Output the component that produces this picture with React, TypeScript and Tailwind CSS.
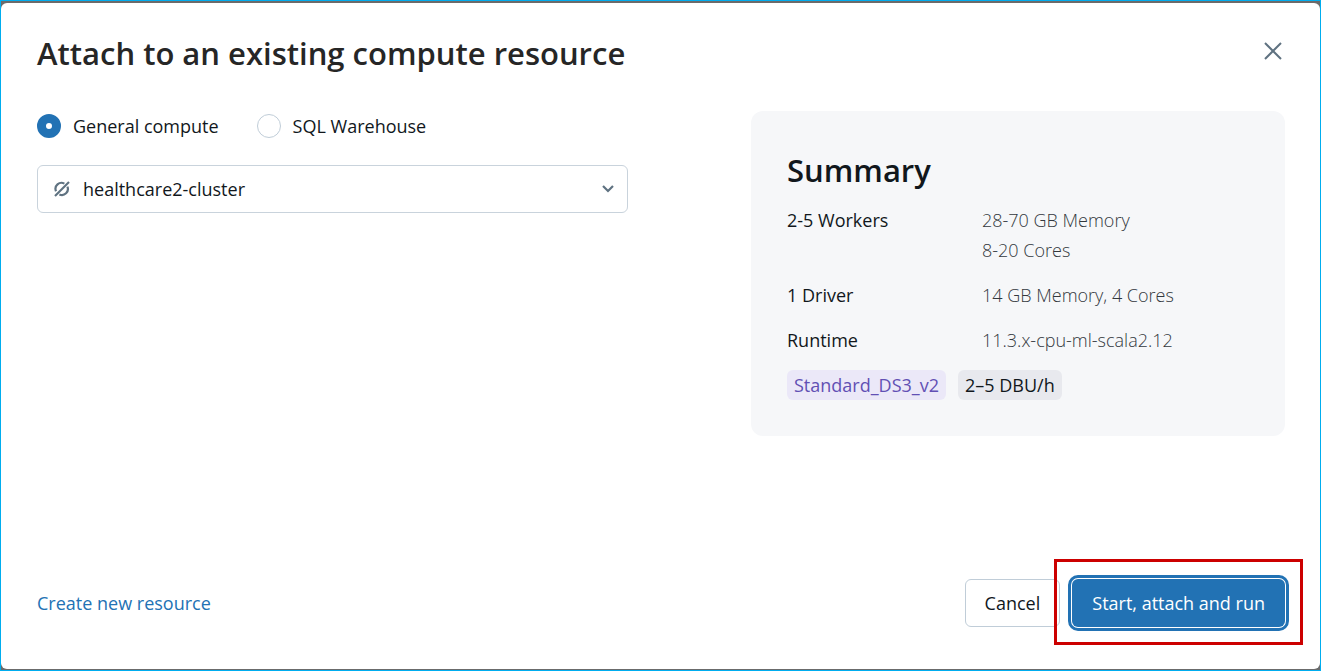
import { useState } from "react";

const computeTypes = ["General compute", "SQL Warehouse"];

const summaryRows = [
  { label: "2-5 Workers", values: ["28-70 GB Memory", "8-20 Cores"] },
  { label: "1 Driver", values: ["14 GB Memory, 4 Cores"] },
  { label: "Runtime", values: ["11.3.x-cpu-ml-scala2.12"] },
];

function StoppedIcon() {
  return (
    <svg width="16" height="16" viewBox="0 0 16 16" fill="none" stroke="#5f7281" strokeWidth="2.2" aria-hidden="true">
      <path d="M2 10.2A6 6 0 0 1 10.4 2.6" />
      <path d="M13.4 5.6A6 6 0 0 1 5.4 13.4" />
      <path d="M1 15 15 1" />
    </svg>
  );
}

function CloseIcon() {
  return (
    <svg width="18" height="18" viewBox="0 0 18 18" fill="none" stroke="#5f7281" strokeWidth="2" aria-hidden="true">
      <path d="M1 1 17 17M17 1 1 17" />
    </svg>
  );
}

function ChevronIcon() {
  return (
    <svg width="12" height="8" viewBox="0 0 12 8" fill="none" stroke="#5f7281" strokeWidth="2.2" aria-hidden="true">
      <path d="M1 1 6 6 11 1" />
    </svg>
  );
}

function Summary() {
  return (
    <section className="rounded-xl bg-[#f6f7f9] p-9">
      <h2 className="mt-[3px] text-[31px] leading-10 font-semibold text-[#11171c]">Summary</h2>
      <dl className="mt-[15px] flex flex-col gap-[15px]">
        {summaryRows.map((row) => (
          <div key={row.label} className="grid grid-cols-[195px_1fr]">
            <dt>{row.label}</dt>
            <dd className="font-light text-[#33383d]">
              {row.values.map((value) => (
                <div key={value}>{value}</div>
              ))}
            </dd>
          </div>
        ))}
      </dl>
      <div className="mt-[15px] flex gap-3">
        <span className="rounded-md bg-[#ebe8f8] px-[7px] text-[#6250b4]">Standard_DS3_v2</span>
        <span className="rounded-md bg-[#e8e9ee] px-[7px]">2–5 DBU/h</span>
      </div>
    </section>
  );
}

export default function App() {
  const [computeType, setComputeType] = useState(computeTypes[0]);

  return (
    <div className="flex min-h-screen flex-col border border-[#00adef] bg-[#6b6b6b] pt-[2px] pb-px font-['Open_Sans',sans-serif] text-[18px] leading-[30px] text-[#11171c]">
      <main role="dialog" aria-labelledby="dialog-title" className="flex grow flex-col rounded-md bg-white pt-6 pr-[35px] pb-[42px] pl-9">
        <header className="flex items-center justify-between">
          <h1 id="dialog-title" className="text-[31px] leading-[52px] font-semibold text-[#262626]">
            Attach to an existing compute resource
          </h1>
          <button type="button" aria-label="Close" className="mb-1 p-[3px]">
            <CloseIcon />
          </button>
        </header>

        <div className="mt-8 grid grid-cols-[591fr_534fr] gap-[123px]">
          <div>
            <div role="radiogroup" aria-label="Compute type" className="flex gap-[38px]">
              {computeTypes.map((type) => (
                <label key={type} className="flex items-center gap-3">
                  <input
                    type="radio"
                    name="compute-type"
                    checked={computeType === type}
                    onChange={() => setComputeType(type)}
                    className="size-6 appearance-none rounded-full border border-[#c0cdd8] bg-white checked:border-[9px] checked:border-[#2272b4]"
                  />
                  {type}
                </label>
              ))}
            </div>
            <div className="relative mt-6">
              <select
                aria-label="Compute resource"
                className="h-12 w-full appearance-none rounded-md border border-[#c9d3dc] bg-white pr-10 pl-[45px]"
              >
                <option>healthcare2-cluster</option>
              </select>
              <span className="pointer-events-none absolute inset-y-0 left-[17px] flex items-center">
                <StoppedIcon />
              </span>
              <span className="pointer-events-none absolute inset-y-0 right-[14px] flex items-center">
                <ChevronIcon />
              </span>
            </div>
          </div>
          <Summary />
        </div>

        <footer className="mt-auto flex items-center justify-between">
          <a href="#create" className="text-[#2272b4]">
            Create new resource
          </a>
          <div className="flex gap-3">
            <button type="button" className="h-12 rounded-md border border-[#c0cdd8] bg-white px-[19px]">
              Cancel
            </button>
            <div className="relative">
              <button
                type="button"
                className="h-12 rounded-md bg-[#2272b4] px-5 text-white ring-1 ring-white outline-3 outline-offset-1 outline-[#2272b4]"
              >
                Start, attach and run
              </button>
              <span className="pointer-events-none absolute -inset-x-[18px] -top-5 -bottom-[18px] border-3 border-[#cc0000]" />
            </div>
          </div>
        </footer>
      </main>
    </div>
  );
}
